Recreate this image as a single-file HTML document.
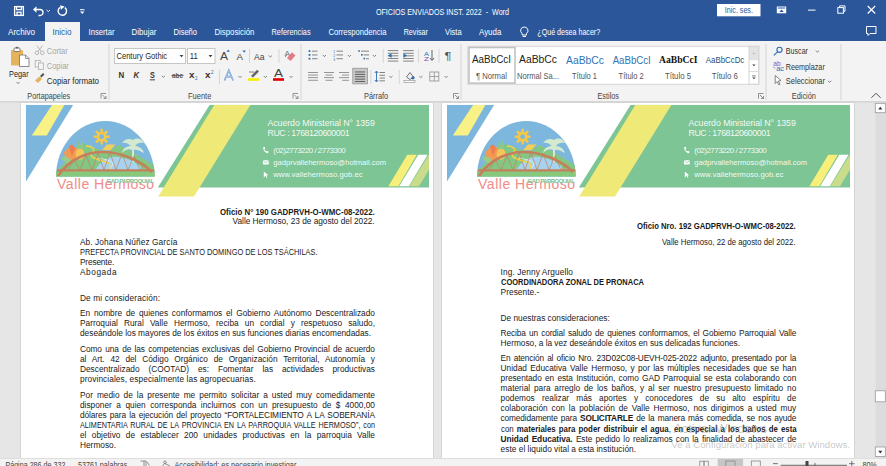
<!DOCTYPE html>
<html><head><meta charset="utf-8">
<style>
*{margin:0;padding:0;box-sizing:border-box}
html,body{width:886px;height:466px;overflow:hidden;background:#e6e6e6;font-family:"Liberation Sans",sans-serif}
.a{position:absolute}
.t{position:absolute;white-space:nowrap}
#title{left:0;top:0;width:886px;height:41px;background:#2b579a}
#ribbon{left:0;top:41px;width:886px;height:61px;background:#f3f3f3;border-bottom:1px solid #d6d6d6}
#doc{left:0;top:102px;width:875px;height:356px;background:#e6e6e6}
.page{position:absolute;top:103px;width:412px;height:355px;background:#fff;box-shadow:0 0 0 1px #d4d4d4}
.tab{position:absolute;top:26px;font-size:9px;line-height:11px;color:#fff}
.rt{position:absolute;font-size:8.6px;line-height:10px;color:#262626;white-space:nowrap}
.gl{position:absolute;font-size:8.6px;line-height:10px;color:#444;white-space:nowrap}
.sep{position:absolute;width:1px;background:#d2d2d2}
.dl{font-family:"Liberation Sans",sans-serif}
.dl b{font-weight:bold}
#status{left:0;top:458px;width:886px;height:8px;background:#f3f3f3;border-top:1px solid #dadada}
</style></head><body>
<!-- ================= TITLE BAR ================= -->
<div id="title" class="a"></div>
<svg class="a" style="left:0;top:0" width="886" height="41" viewBox="0 0 886 41">
  <!-- save -->
  <g fill="none" stroke="#fff" stroke-width="1.3">
    <rect x="14.6" y="6.6" width="8.8" height="8.8"/>
    <rect x="16.5" y="6.6" width="5" height="3"/>
    <rect x="17" y="12.2" width="4" height="3.2"/>
  </g>
  <!-- undo -->
  <path d="M35 9.5 H40 A3 3 0 0 1 40 15.5 H38.5" fill="none" stroke="#fff" stroke-width="1.4"/>
  <path d="M33 9.5 L36.5 6.3 L36.5 12.7 Z" fill="#fff"/>
  <path d="M46.5 10 L48.3 11.6 L50 10" fill="none" stroke="#fff" stroke-width="0.9"/>
  <!-- redo -->
  <path d="M64.8 7.6 A4.2 4.2 0 1 1 60.2 7.4" fill="none" stroke="#fff" stroke-width="1.4"/>
  <path d="M60 5.2 L64.6 6.4 L61 9.8 Z" fill="#fff"/>
  <!-- customize -->
  <rect x="80" y="9.2" width="4.5" height="1" fill="#fff"/>
  <path d="M80 11.5 H84.5 L82.25 14 Z" fill="#fff"/>
  <!-- Inic ses -->
  <rect x="717" y="4" width="43.5" height="12.3" fill="#fff"/>
  <!-- ribbon display -->
  <rect x="776.8" y="6.5" width="9.4" height="6.8" fill="#fff"/>
  <rect x="777.8" y="7.5" width="7.4" height="1" fill="#2b579a"/>
  <path d="M779.3 12 L781.5 9.5 L783.7 12 Z" fill="#2b579a"/>
  <!-- min -->
  <rect x="808" y="9.6" width="7.5" height="1" fill="#fff"/>
  <!-- restore -->
  <rect x="837.8" y="7.6" width="5.6" height="5.6" fill="none" stroke="#fff" stroke-width="1"/>
  <path d="M839.6 7.2 V5.9 H845 V11.3 H843.8" fill="none" stroke="#fff" stroke-width="1"/>
  <!-- close -->
  <path d="M867.7 6 L875.2 13.5 M875.2 6 L867.7 13.5" stroke="#fff" stroke-width="1.1"/>
  <!-- comment -->
  <path d="M866.5 26.5 H876 V33.5 H870 L868 35.5 V33.5 H866.5 Z" fill="none" stroke="#fff" stroke-width="1"/>
  <!-- lightbulb -->
  <path d="M524.3 27 A3.6 3.6 0 0 1 526.5 33.5 V35 H522.1 V33.5 A3.6 3.6 0 0 1 524.3 27 Z" fill="none" stroke="#fff" stroke-width="1"/>
  <rect x="522.6" y="36" width="3.4" height="1" fill="#fff"/>
</svg>
<div class="a" style="left:45px;top:22px;width:35px;height:20px;background:#f3f3f3"></div>
<svg class="a" style="left:0;top:0" width="886" height="41" viewBox="0 0 886 41">
<g font-family="Liberation Sans" font-size="9" fill="#fff">
<text x="375.9" y="14.8" textLength="133.1" lengthAdjust="spacingAndGlyphs">OFICIOS ENVIADOS INST. 2022&#160;&#160;-&#160;&#160;Word</text>
<text x="724.8" y="13.2" textLength="28.1" lengthAdjust="spacingAndGlyphs" fill="#2b579a">Inic. ses.</text>
<text x="8" y="35.2" textLength="27" lengthAdjust="spacingAndGlyphs">Archivo</text>
<text x="52.5" y="35.2" textLength="19" lengthAdjust="spacingAndGlyphs" fill="#2b579a">Inicio</text>
<text x="88.5" y="35.2" textLength="26" lengthAdjust="spacingAndGlyphs">Insertar</text>
<text x="131.5" y="35.2" textLength="25" lengthAdjust="spacingAndGlyphs">Dibujar</text>
<text x="173.5" y="35.2" textLength="23.5" lengthAdjust="spacingAndGlyphs">Diseño</text>
<text x="214.5" y="35.2" textLength="39.8" lengthAdjust="spacingAndGlyphs">Disposición</text>
<text x="271.6" y="35.2" textLength="39" lengthAdjust="spacingAndGlyphs">Referencias</text>
<text x="328.5" y="35.2" textLength="57.9" lengthAdjust="spacingAndGlyphs">Correspondencia</text>
<text x="403.7" y="35.2" textLength="24.3" lengthAdjust="spacingAndGlyphs">Revisar</text>
<text x="445" y="35.2" textLength="16.6" lengthAdjust="spacingAndGlyphs">Vista</text>
<text x="479" y="35.2" textLength="22.3" lengthAdjust="spacingAndGlyphs">Ayuda</text>
<text x="537.3" y="35.2" textLength="62.9" lengthAdjust="spacingAndGlyphs">¿Qué desea hacer?</text>
</g></svg>

<!-- ================= RIBBON ================= -->
<div id="ribbon" class="a"></div>
<svg class="a" style="left:0;top:0" width="886" height="102" viewBox="0 0 886 102">
<rect x="108.5" y="44" width="1" height="56" fill="#d6d6d6"/>
<rect x="300.5" y="44" width="1" height="56" fill="#d6d6d6"/>
<rect x="460.5" y="44" width="1" height="56" fill="#d6d6d6"/>
<rect x="765.5" y="44" width="1" height="56" fill="#d6d6d6"/>
<rect x="840.5" y="44" width="1" height="56" fill="#d6d6d6"/>
<rect x="11" y="50" width="12" height="15.5" rx="1" fill="#e6b35c"/>
<rect x="14" y="48" width="6" height="3.5" rx="0.8" fill="#fff" stroke="#666" stroke-width="0.8"/>
<rect x="15.8" y="46.8" width="2.4" height="1.6" fill="#666"/>
<path d="M19.5,55 H25.5 L29,58.5 V66.5 H19.5 Z" fill="#fff" stroke="#707070" stroke-width="0.8"/>
<path d="M25.5,55 V58.5 H29" fill="none" stroke="#707070" stroke-width="0.7"/>
<text x="9" y="76.6" font-family="Liberation Sans" font-size="8.6" font-weight="normal" fill="#262626" textLength="19.6" lengthAdjust="spacingAndGlyphs" >Pegar</text>
<path d="M16.5,82 L18.1,83.6 L19.7,82" fill="none" stroke="#666" stroke-width="0.8"/>
<g fill="none" stroke="#b0b0b0" stroke-width="0.9"><circle cx="37" cy="52.8" r="1.8"/><circle cx="42.3" cy="52.8" r="1.8"/><path d="M38,51.3 L42.5,45.5 M41.3,51.3 L36.8,45.5"/></g>
<text x="46.8" y="54.4" font-family="Liberation Sans" font-size="8.6" font-weight="normal" fill="#a6a6a6" textLength="21" lengthAdjust="spacingAndGlyphs" >Cortar</text>
<g fill="none" stroke="#b0b0b0" stroke-width="0.8"><rect x="35.2" y="60.5" width="5" height="6.5"/><rect x="38.4" y="63" width="5" height="6.5" fill="#f3f3f3"/></g>
<text x="46.8" y="68.8" font-family="Liberation Sans" font-size="8.6" font-weight="normal" fill="#a6a6a6" textLength="22" lengthAdjust="spacingAndGlyphs" >Copiar</text>
<path d="M35,80.5 L39.5,76.5 L42,79 L38,83 Z" fill="#e6b35c"/><path d="M40,76 L43,73 L44.5,74.5 L41.5,77.5 Z" fill="#555"/>
<text x="46.8" y="84.3" font-family="Liberation Sans" font-size="8.6" font-weight="normal" fill="#262626" textLength="52.2" lengthAdjust="spacingAndGlyphs" >Copiar formato</text>
<text x="27.3" y="99" font-family="Liberation Sans" font-size="8.6" font-weight="normal" fill="#444" textLength="42.9" lengthAdjust="spacingAndGlyphs" >Portapapeles</text>
<g fill="none" stroke="#777" stroke-width="0.8"><path d="M101,98.5 V93.5 H106"/><path d="M102.5,95.0 L106,98.5 M106,96.0 V98.5 H103.5"/></g>
<rect x="114.5" y="48.5" width="71" height="15" fill="#fff" stroke="#c6c6c6" stroke-width="1"/>
<text x="116.4" y="59.1" font-family="Liberation Sans" font-size="8.6" font-weight="normal" fill="#262626" textLength="50.8" lengthAdjust="spacingAndGlyphs" >Century Gothic</text>
<path d="M179.5,55 L183.5,55 L181.5,57.3 Z" fill="#444"/>
<rect x="187.5" y="48.5" width="27.5" height="15" fill="#fff" stroke="#c6c6c6" stroke-width="1"/>
<text x="189.8" y="59.1" font-family="Liberation Sans" font-size="8.6" font-weight="normal" fill="#262626" textLength="8" lengthAdjust="spacingAndGlyphs" >11</text>
<path d="M208.5,55 L212.5,55 L210.5,57.3 Z" fill="#444"/>
<text x="220" y="60" font-family="Liberation Sans" font-size="11" font-weight="normal" fill="#444" textLength="8" lengthAdjust="spacingAndGlyphs" >A</text>
<path d="M226.5,51.8 L228.2,49.5 L229.9,51.8 Z" fill="#2b6cb0"/>
<text x="236.5" y="60" font-family="Liberation Sans" font-size="9" font-weight="normal" fill="#444" textLength="6.5" lengthAdjust="spacingAndGlyphs" >A</text>
<path d="M242.5,50.5 L245.9,50.5 L244.2,52.8 Z" fill="#2b6cb0"/>
<rect x="249" y="49" width="1" height="14" fill="#d6d6d6"/>
<text x="254" y="60" font-family="Liberation Sans" font-size="9.5" font-weight="normal" fill="#444" textLength="10.5" lengthAdjust="spacingAndGlyphs" >Aa</text>
<path d="M268.8,55.5 L270.40000000000003,57.1 L272.0,55.5" fill="none" stroke="#666" stroke-width="0.8"/>
<rect x="278.5" y="49" width="1" height="14" fill="#d6d6d6"/>
<path d="M287,58 L292,52.3 L295.5,55.5 L290.5,61 Z" fill="#e37c86"/><path d="M285,57 L287.5,54.5" stroke="#777" stroke-width="0.8"/>
<text x="284.4" y="55.5" font-family="Liberation Sans" font-size="7" font-weight="normal" fill="#777" textLength="5.5" lengthAdjust="spacingAndGlyphs" >A</text>
<text x="118.5" y="78.2" font-family="Liberation Sans" font-size="8.8" font-weight="bold" fill="#333" textLength="5.7" lengthAdjust="spacingAndGlyphs" >N</text>
<text x="133.4" y="78.2" font-family="Liberation Sans" font-size="8.8" font-weight="bold" fill="#333" textLength="5.6" lengthAdjust="spacingAndGlyphs" font-style="italic">K</text>
<text x="150" y="78.2" font-family="Liberation Sans" font-size="8.8" font-weight="bold" fill="#333" textLength="4.8" lengthAdjust="spacingAndGlyphs" >S</text>
<rect x="149.8" y="79.4" width="5.2" height="0.9" fill="#333"/>
<path d="M161.8,75.8 L163.4,77.39999999999999 L165.0,75.8" fill="none" stroke="#666" stroke-width="0.8"/>
<text x="172" y="78.2" font-family="Liberation Sans" font-size="8" font-weight="bold" fill="#555" textLength="11" lengthAdjust="spacingAndGlyphs" >abc</text>
<rect x="171.5" y="75" width="12" height="0.8" fill="#555"/>
<text x="189" y="78.2" font-family="Liberation Sans" font-size="9" font-weight="bold" fill="#333" textLength="5.5" lengthAdjust="spacingAndGlyphs" >x</text>
<text x="195" y="80.3" font-family="Liberation Sans" font-size="4.5" font-weight="normal" fill="#2b6cb0" textLength="2.5" lengthAdjust="spacingAndGlyphs" >2</text>
<text x="205" y="78.2" font-family="Liberation Sans" font-size="9" font-weight="bold" fill="#333" textLength="5.5" lengthAdjust="spacingAndGlyphs" >x</text>
<text x="211" y="73.5" font-family="Liberation Sans" font-size="4.5" font-weight="normal" fill="#2b6cb0" textLength="2.5" lengthAdjust="spacingAndGlyphs" >2</text>
<rect x="219" y="70" width="1" height="14" fill="#d6d6d6"/>
<path d="M224.5,80.5 L228.8,70.3 L233.1,80.5 M226.3,76.6 H231.3" fill="none" stroke="#5b8fd0" stroke-width="1.6"/><path d="M224.5,80.5 L228.8,70.3 L233.1,80.5 M226.3,76.6 H231.3" fill="none" stroke="#f3f3f3" stroke-width="0.5"/>
<path d="M238.5,76 L240.1,77.6 L241.7,76" fill="none" stroke="#666" stroke-width="0.8"/>
<path d="M251,76 L257,69.8 L259,71.5 L253,77.5 Z" fill="#666"/><path d="M249,72 L254,72" stroke="#666" stroke-width="0.8"/>
<rect x="248" y="78.2" width="11.3" height="2.6" fill="#f6ee00"/>
<path d="M263.8,76 L265.40000000000003,77.6 L267.0,76" fill="none" stroke="#666" stroke-width="0.8"/>
<text x="274" y="77" font-family="Liberation Sans" font-size="10" font-weight="normal" fill="#444" textLength="9" lengthAdjust="spacingAndGlyphs" >A</text>
<rect x="273" y="78.2" width="11" height="2.6" fill="#e00000"/>
<path d="M289.5,76 L291.1,77.6 L292.7,76" fill="none" stroke="#666" stroke-width="0.8"/>
<text x="188" y="99" font-family="Liberation Sans" font-size="8.6" font-weight="normal" fill="#444" textLength="23.4" lengthAdjust="spacingAndGlyphs" >Fuente</text>
<g fill="none" stroke="#777" stroke-width="0.8"><path d="M293,98.5 V93.5 H298"/><path d="M294.5,95.0 L298,98.5 M298,96.0 V98.5 H295.5"/></g>
<g fill="#2b6cb0"><rect x="308.6" y="50.2" width="1.8" height="1.8"/><rect x="308.6" y="54.0" width="1.8" height="1.8"/><rect x="308.6" y="57.800000000000004" width="1.8" height="1.8"/></g>
<rect x="312" y="50.7" width="5.5" height="0.9" fill="#777"/><rect x="312" y="54.5" width="5.5" height="0.9" fill="#777"/><rect x="312" y="58.300000000000004" width="5.5" height="0.9" fill="#777"/>
<path d="M322.8,55 L324.40000000000003,56.6 L326.0,55" fill="none" stroke="#666" stroke-width="0.8"/>
<g fill="#2b6cb0" font-family="Liberation Sans" font-size="3.4"><text x="333.2" y="53.0">1</text><text x="333.2" y="56.8">2</text><text x="333.2" y="60.6">3</text></g>
<rect x="336.5" y="50.7" width="6.5" height="0.9" fill="#777"/><rect x="336.5" y="54.5" width="6.5" height="0.9" fill="#777"/><rect x="336.5" y="58.300000000000004" width="6.5" height="0.9" fill="#777"/>
<path d="M347.8,55 L349.40000000000003,56.6 L351.0,55" fill="none" stroke="#666" stroke-width="0.8"/>
<g fill="#2b6cb0"><rect x="358.3" y="50.2" width="1.6" height="1.6"/><rect x="361" y="54" width="1.6" height="1.6"/><rect x="363.5" y="57.8" width="1.6" height="1.6"/></g>
<rect x="361" y="50.7" width="8" height="0.9" fill="#777"/><rect x="363.5" y="54.5" width="5.5" height="0.9" fill="#777"/><rect x="366" y="58.3" width="3" height="0.9" fill="#777"/>
<path d="M372.8,55 L374.40000000000003,56.6 L376.0,55" fill="none" stroke="#666" stroke-width="0.8"/>
<rect x="382.8" y="49" width="1" height="14" fill="#d6d6d6"/>
<rect x="387.8" y="50.2" width="10.5" height="0.9" fill="#777"/><rect x="387.8" y="52.800000000000004" width="10.5" height="0.9" fill="#777"/><rect x="387.8" y="55.400000000000006" width="10.5" height="0.9" fill="#777"/><rect x="387.8" y="58.0" width="10.5" height="0.9" fill="#777"/><rect x="387.8" y="60.6" width="10.5" height="0.9" fill="#777"/>
<path d="M388,55.6 L391.5,53.3 V57.9 Z" fill="#2b6cb0"/>
<rect x="403.2" y="50.2" width="10.5" height="0.9" fill="#777"/><rect x="403.2" y="52.800000000000004" width="10.5" height="0.9" fill="#777"/><rect x="403.2" y="55.400000000000006" width="10.5" height="0.9" fill="#777"/><rect x="403.2" y="58.0" width="10.5" height="0.9" fill="#777"/><rect x="403.2" y="60.6" width="10.5" height="0.9" fill="#777"/>
<path d="M407,55.6 L403.5,53.3 V57.9 Z" fill="#2b6cb0"/>
<rect x="418" y="49" width="1" height="14" fill="#d6d6d6"/>
<text x="424" y="55.5" font-family="Liberation Sans" font-size="6" font-weight="normal" fill="#2b6cb0" textLength="5" lengthAdjust="spacingAndGlyphs" >A</text>
<text x="424" y="61" font-family="Liberation Sans" font-size="6" font-weight="normal" fill="#8a4fb0" textLength="5" lengthAdjust="spacingAndGlyphs" >Z</text>
<path d="M432,50 V60 M430,58 L432,60.5 L434,58" fill="none" stroke="#555" stroke-width="0.9"/>
<rect x="438.5" y="49" width="1" height="14" fill="#d6d6d6"/>
<text x="444.5" y="60" font-family="Liberation Sans" font-size="10.5" font-weight="normal" fill="#555" textLength="7" lengthAdjust="spacingAndGlyphs" >¶</text>
<rect x="308" y="72.0" width="10" height="0.9" fill="#8a8a8a"/><rect x="308" y="74.6" width="10" height="0.9" fill="#8a8a8a"/><rect x="308" y="77.2" width="10" height="0.9" fill="#8a8a8a"/><rect x="308" y="79.8" width="10" height="0.9" fill="#8a8a8a"/>
<rect x="324" y="72.0" width="10" height="0.9" fill="#8a8a8a"/><rect x="325.5" y="74.6" width="7" height="0.9" fill="#8a8a8a"/><rect x="324" y="77.2" width="10" height="0.9" fill="#8a8a8a"/><rect x="325.5" y="79.8" width="7" height="0.9" fill="#8a8a8a"/>
<rect x="339" y="72.0" width="10" height="0.9" fill="#8a8a8a"/><rect x="342" y="74.6" width="7" height="0.9" fill="#8a8a8a"/><rect x="339" y="77.2" width="10" height="0.9" fill="#8a8a8a"/><rect x="342" y="79.8" width="7" height="0.9" fill="#8a8a8a"/>
<rect x="352.8" y="68.3" width="14.6" height="15.5" fill="#c8c8c8" stroke="#9a9a9a" stroke-width="0.9"/>
<rect x="355" y="71.5" width="10" height="0.9" fill="#555"/><rect x="355" y="73.9" width="10" height="0.9" fill="#555"/><rect x="355" y="76.3" width="10" height="0.9" fill="#555"/><rect x="355" y="78.7" width="10" height="0.9" fill="#555"/><rect x="355" y="81.1" width="10" height="0.9" fill="#555"/>
<rect x="370.3" y="70" width="1" height="14" fill="#d6d6d6"/>
<path d="M376.5,71.5 V81.5 M374.8,73 L376.5,71 L378.2,73 M374.8,80 L376.5,82 L378.2,80" fill="none" stroke="#2b6cb0" stroke-width="0.9"/>
<rect x="379.5" y="72.0" width="5.5" height="0.9" fill="#777"/><rect x="379.5" y="74.8" width="5.5" height="0.9" fill="#777"/><rect x="379.5" y="77.6" width="5.5" height="0.9" fill="#777"/><rect x="379.5" y="80.4" width="5.5" height="0.9" fill="#777"/>
<path d="M389.3,76 L390.90000000000003,77.6 L392.5,76" fill="none" stroke="#666" stroke-width="0.8"/>
<rect x="398.8" y="70" width="1" height="14" fill="#d6d6d6"/>
<path d="M406.5,77 L410,72.5 L413.5,77 L410,79.5 Z" fill="none" stroke="#666" stroke-width="0.9"/><circle cx="413" cy="77.8" r="1.6" fill="#2b6cb0"/><rect x="404" y="80.5" width="11" height="2" fill="#fff" stroke="#888" stroke-width="0.6"/>
<path d="M419.3,76 L420.90000000000003,77.6 L422.5,76" fill="none" stroke="#666" stroke-width="0.8"/>
<g fill="none" stroke="#9a9a9a" stroke-width="0.9"><rect x="429.8" y="72" width="9" height="9"/><path d="M434.3,72 V81 M429.8,76.5 H438.8"/></g>
<path d="M444.5,76 L446.1,77.6 L447.7,76" fill="none" stroke="#666" stroke-width="0.8"/>
<text x="364" y="99" font-family="Liberation Sans" font-size="8.6" font-weight="normal" fill="#444" textLength="24.2" lengthAdjust="spacingAndGlyphs" >Párrafo</text>
<g fill="none" stroke="#777" stroke-width="0.8"><path d="M453.5,98.5 V93.5 H458.5"/><path d="M455.0,95.0 L458.5,98.5 M458.5,96.0 V98.5 H456.0"/></g>
<rect x="467.8" y="46.3" width="291" height="38" fill="#fff" stroke="#d6d6d6" stroke-width="1"/>
<rect x="469" y="47.5" width="46" height="35.6" fill="#fff" stroke="#c2c2c2" stroke-width="1.6"/>
<text x="472" y="63.3" font-family="Liberation Sans" font-size="10" font-weight="normal" fill="#222" textLength="39" lengthAdjust="spacingAndGlyphs" >AaBbCcI</text>
<text x="519" y="63.3" font-family="Liberation Sans" font-size="10" font-weight="normal" fill="#222" textLength="38" lengthAdjust="spacingAndGlyphs" >AaBbCc</text>
<text x="566" y="64" font-family="Liberation Sans" font-size="11.5" font-weight="normal" fill="#2e74b5" textLength="38" lengthAdjust="spacingAndGlyphs" >AaBbCc</text>
<text x="612.7" y="63.5" font-family="Liberation Sans" font-size="10" font-weight="normal" fill="#2e74b5" textLength="38" lengthAdjust="spacingAndGlyphs" >AaBbCcI</text>
<text x="659" y="63.3" font-family="Liberation Serif" font-size="10.5" font-weight="bold" fill="#111" textLength="38.5" lengthAdjust="spacingAndGlyphs" >AaBbCcI</text>
<text x="705.8" y="63.3" font-family="Liberation Sans" font-size="9.5" font-weight="normal" fill="#1f4e79" textLength="38.5" lengthAdjust="spacingAndGlyphs" >AaBbCcDc</text>
<text x="476" y="79" font-family="Liberation Sans" font-size="8.4" font-weight="normal" fill="#555" textLength="31" lengthAdjust="spacingAndGlyphs" >¶ Normal</text>
<text x="517" y="79" font-family="Liberation Sans" font-size="8.4" font-weight="normal" fill="#555" textLength="42" lengthAdjust="spacingAndGlyphs" >Normal Sa...</text>
<text x="572" y="79" font-family="Liberation Sans" font-size="8.4" font-weight="normal" fill="#555" textLength="25" lengthAdjust="spacingAndGlyphs" >Título 1</text>
<text x="618.6" y="79" font-family="Liberation Sans" font-size="8.4" font-weight="normal" fill="#555" textLength="25.2" lengthAdjust="spacingAndGlyphs" >Título 2</text>
<text x="665" y="79" font-family="Liberation Sans" font-size="8.4" font-weight="normal" fill="#555" textLength="26" lengthAdjust="spacingAndGlyphs" >Título 5</text>
<text x="711.7" y="79" font-family="Liberation Sans" font-size="8.4" font-weight="normal" fill="#555" textLength="26.1" lengthAdjust="spacingAndGlyphs" >Título 6</text>
<rect x="749" y="46.3" width="9.8" height="13" fill="#e3e3e3"/>
<path d="M752.2,54 L753.9,52.2 L755.6,54 Z" fill="#c0c0c0"/>
<rect x="749" y="46.3" width="9.8" height="38" fill="none" stroke="#d6d6d6" stroke-width="1"/>
<rect x="749" y="59.3" width="9.8" height="0.8" fill="#d6d6d6"/><rect x="749" y="71" width="9.8" height="0.8" fill="#d6d6d6"/>
<path d="M752.2,64.5 L755.6,64.5 L753.9,66.3 Z" fill="#444"/>
<rect x="752" y="75.6" width="3.8" height="0.7" fill="#444"/><path d="M752.2,77.5 L755.6,77.5 L753.9,79.3 Z" fill="#444"/>
<text x="597.5" y="99" font-family="Liberation Sans" font-size="8.6" font-weight="normal" fill="#444" textLength="21.5" lengthAdjust="spacingAndGlyphs" >Estilos</text>
<g fill="none" stroke="#777" stroke-width="0.8"><path d="M758.5,98.5 V93.5 H763.5"/><path d="M760.0,95.0 L763.5,98.5 M763.5,96.0 V98.5 H761.0"/></g>
<g fill="none" stroke="#2b6cb0" stroke-width="1.1"><circle cx="779.5" cy="49.8" r="2.6"/><path d="M777.6,51.8 L773.8,55.3"/></g>
<text x="785.8" y="54" font-family="Liberation Sans" font-size="8.6" font-weight="normal" fill="#333" textLength="22.2" lengthAdjust="spacingAndGlyphs" >Buscar</text>
<path d="M815.8,50.6 L817.4,52.2 L819.0,50.6" fill="none" stroke="#666" stroke-width="0.8"/>
<text x="773.2" y="65.8" font-family="Liberation Sans" font-size="8" font-weight="normal" fill="#8a4fb0" textLength="7.5" lengthAdjust="spacingAndGlyphs" >ab</text>
<text x="776.2" y="70.8" font-family="Liberation Sans" font-size="8" font-weight="normal" fill="#2b6cb0" textLength="7.8" lengthAdjust="spacingAndGlyphs" >ac</text>
<path d="M773.5,66.8 L775,68.5" stroke="#2b6cb0" stroke-width="0.8"/>
<text x="785.8" y="69.6" font-family="Liberation Sans" font-size="8.6" font-weight="normal" fill="#333" textLength="39" lengthAdjust="spacingAndGlyphs" >Reemplazar</text>
<path d="M775.2,75.5 V83.5 L777,81.5 L778.8,84.8 L780,84.2 L778.4,81 L781,80.5 Z" fill="#fff" stroke="#666" stroke-width="0.8"/>
<text x="785.8" y="84.4" font-family="Liberation Sans" font-size="8.6" font-weight="normal" fill="#333" textLength="39.2" lengthAdjust="spacingAndGlyphs" >Seleccionar</text>
<path d="M828,80.8 L829.6,82.39999999999999 L831.2,80.8" fill="none" stroke="#666" stroke-width="0.8"/>
<text x="791.7" y="99" font-family="Liberation Sans" font-size="8.6" font-weight="normal" fill="#444" textLength="24.3" lengthAdjust="spacingAndGlyphs" >Edición</text>
<path d="M871.3,97.8 L876,93.3 L880.7,97.8" fill="none" stroke="#555" stroke-width="1"/>
</svg>

<!-- ================= DOCUMENT ================= -->
<div id="doc" class="a"></div>
<div class="a" style="left:0;top:102px;width:875px;height:1px;background:#dcdcdc"></div>
<div class="page" style="left:21px"></div>
<div class="page" style="left:442px"></div>
<svg class="a" style="left:0;top:0;pointer-events:none" width="886" height="466" viewBox="0 0 886 466">
<defs><clipPath id="hc0"><rect x="26" y="104.7" width="403" height="95"/></clipPath>
<clipPath id="dome0"><path d="M56,176.5 A49.3,55.5 0 0 1 154.6,176.5 Z"/></clipPath></defs>
<g transform="translate(0,0)">
<g clip-path="url(#hc0)">
 <polygon points="26,104.7 73.3,104.7 26,181.5" fill="#7db6dc"/>
 <polygon points="52.2,104.7 64.5,104.7 46.8,135.4 31.8,135.4" fill="#f8f186"/>
 <polygon points="209.7,104.7 429,104.7 429,187.6 157.8,187.6" fill="#7ec596"/>
 <polygon points="214.4,104.7 250.5,104.7 194,196.6 158.2,196.6" fill="#efea78"/>
 <polygon points="407.3,154.8 416.8,154.8 398.3,186.2 388.4,186.2" fill="#f8ef7a"/>
 <polygon points="418.3,154.8 427.6,154.8 408.8,186.2 399.2,186.2" fill="#ffffff"/>
 <polygon points="428.8,154.8 438,154.8 419,186.2 409.4,186.2" fill="#c9dc8a"/>
</g>
<!-- logo -->
<path d="M56,176.5 A49.3,55.5 0 0 1 154.6,176.5 Z" fill="#7eb7de"/>
<g clip-path="url(#dome0)">
 <path d="M56,172 C62,165 72,156 84,144 C90,146 100,150 108,152 L118,145 C130,150 142,158 156,166 L156,177 L56,177 Z" fill="#84c683"/>
 <path d="M102,150.2 L107,144.4 L115.5,144.4 L110.5,150.2 Z" fill="#f2cf5a"/>
 <path d="M92,177 C96,166 104,158 112,157 C122,156 132,160 140,166 L146,177 Z" fill="#a6d4f0"/>
 <path d="M98,158 C108,160 116,162 112,166 C106,170 116,172 124,174" fill="none" stroke="#ffffff" stroke-width="0.8" opacity="0.8"/>
 <path d="M86,146 C92,146 96,149 92,153 C88,157 98,160 106,162 C114,164 106,168 112,172" fill="none" stroke="#f4d24a" stroke-width="1.4"/>
 <path d="M56,171 H156 V177 H56 Z" fill="#86c97c"/>
 <path d="M64,152 C70,146 76,145 78,150 C80,156 78,160 74,162 C70,162 64,158 64,152 Z" fill="#f29a52"/>
 <path d="M69,147 C71,143 74,145 75,149 L72,156 Z" fill="#ef7d50"/>
 <path d="M61,158 C65,155 70,157 73,163 C68,164 63,162 61,158 Z" fill="#9acb8a"/>
 <ellipse cx="80" cy="154" rx="4.4" ry="5.8" fill="#f6c55a"/>
 <path d="M76.5,149 L78,140 L80,146 L82,139.5 L83.5,149 Z" fill="#8cc88a"/>
 <g fill="#f6c847">
  <circle cx="101.6" cy="136.7" r="5"/>
  <path d="M101.6,128.8 V144.6 M93.7,136.7 H109.5 M96,131.1 L107.2,142.3 M107.2,131.1 L96,142.3" stroke="#f6c847" stroke-width="2.4"/>
 </g>
 <circle cx="101.6" cy="136.7" r="2.4" fill="#7eb7de"/>
 <path d="M133,140 C137,137 142,139 144,143 C140,142 137,143 135,146 C139,146 143,149 144,153 C139,150 136,149 134,150 L134,162 L132,162 L132,150 C129,148 125,150 122,153 C123,148 127,146 131,146 C128,143 125,142 122,143 C125,139 129,138 133,140 Z" fill="#d3ead0"/>
 <path d="M58,176 C70,158 88,152 103,152 C120,152 140,160 152,172" fill="none" stroke="#c4805c" stroke-width="2.6"/>
 <path d="M57,170.3 H156" stroke="#c4805c" stroke-width="2.2"/>
 <path d="M68,170 L74,160 L80,170 L86,155.5 L92,170 L98,153 L104,170 L110,152.5 L116,170 L122,153.5 L128,170 L134,156 L140,170 L146,164" fill="none" stroke="#c4805c" stroke-width="0.7"/>
</g>
<text x="57" y="189" font-family="Liberation Sans" font-size="14" fill="#f08c8a" textLength="97" lengthAdjust="spacing">Valle Hermoso</text>
<rect x="110.8" y="177" width="45" height="5.2" fill="#fff"/>
<text x="106.6" y="182.6" font-family="Liberation Sans" font-size="5.9" font-weight="bold" fill="#7cc091" textLength="47.4" lengthAdjust="spacing">GAD PARROQUIAL</text>
<!-- contact -->
<g fill="#ffffff" font-family="Liberation Sans" fill-opacity="0.92">
 <text x="267.5" y="126" font-size="8.8" textLength="107.3" lengthAdjust="spacing">Acuerdo Ministerial N° 1359</text>
 <text x="267.5" y="135.7" font-size="8.8" textLength="82.1" lengthAdjust="spacing">RUC : 1768120600001</text>
 <text x="273.3" y="153.2" font-size="8" textLength="72.5" lengthAdjust="spacing">(02)2773220 / 2773300</text>
 <text x="273.3" y="164.8" font-size="7.6" textLength="112.7" lengthAdjust="spacing">gadprvallehermoso@hotmail.com</text>
 <text x="273.3" y="177.4" font-size="7.6" textLength="89.3" lengthAdjust="spacing">www.vallehermoso.gob.ec</text>
</g>
<g fill="#ffffff">
 <path d="M263.3,147 C263,150 265,153 268,153.3 L268.6,151.8 L266.8,150.8 L266,151.5 C265.2,151 264.6,150 264.5,149.2 L265.3,148.6 L264.6,146.7 Z"/>
 <rect x="262.9" y="160.2" width="5.8" height="4.2" rx="0.6"/>
 <path d="M263.8,177.4 L263.8,171.4 L268.3,175.2 L266.4,175.3 L267.4,177.6 L266.6,178 L265.6,175.8 Z"/>
</g>
<path d="M263.2,160.7 L265.8,162.8 L268.4,160.7" fill="none" stroke="#7ec596" stroke-width="0.7"/>
</g></svg><svg class="a" style="left:0;top:0;pointer-events:none" width="886" height="466" viewBox="0 0 886 466">
<defs><clipPath id="hc421"><rect x="26" y="104.7" width="403" height="95"/></clipPath>
<clipPath id="dome421"><path d="M56,176.5 A49.3,55.5 0 0 1 154.6,176.5 Z"/></clipPath></defs>
<g transform="translate(421,0)">
<g clip-path="url(#hc421)">
 <polygon points="26,104.7 73.3,104.7 26,181.5" fill="#7db6dc"/>
 <polygon points="52.2,104.7 64.5,104.7 46.8,135.4 31.8,135.4" fill="#f8f186"/>
 <polygon points="209.7,104.7 429,104.7 429,187.6 157.8,187.6" fill="#7ec596"/>
 <polygon points="214.4,104.7 250.5,104.7 194,196.6 158.2,196.6" fill="#efea78"/>
 <polygon points="407.3,154.8 416.8,154.8 398.3,186.2 388.4,186.2" fill="#f8ef7a"/>
 <polygon points="418.3,154.8 427.6,154.8 408.8,186.2 399.2,186.2" fill="#ffffff"/>
 <polygon points="428.8,154.8 438,154.8 419,186.2 409.4,186.2" fill="#c9dc8a"/>
</g>
<!-- logo -->
<path d="M56,176.5 A49.3,55.5 0 0 1 154.6,176.5 Z" fill="#7eb7de"/>
<g clip-path="url(#dome421)">
 <path d="M56,172 C62,165 72,156 84,144 C90,146 100,150 108,152 L118,145 C130,150 142,158 156,166 L156,177 L56,177 Z" fill="#84c683"/>
 <path d="M102,150.2 L107,144.4 L115.5,144.4 L110.5,150.2 Z" fill="#f2cf5a"/>
 <path d="M92,177 C96,166 104,158 112,157 C122,156 132,160 140,166 L146,177 Z" fill="#a6d4f0"/>
 <path d="M98,158 C108,160 116,162 112,166 C106,170 116,172 124,174" fill="none" stroke="#ffffff" stroke-width="0.8" opacity="0.8"/>
 <path d="M86,146 C92,146 96,149 92,153 C88,157 98,160 106,162 C114,164 106,168 112,172" fill="none" stroke="#f4d24a" stroke-width="1.4"/>
 <path d="M56,171 H156 V177 H56 Z" fill="#86c97c"/>
 <path d="M64,152 C70,146 76,145 78,150 C80,156 78,160 74,162 C70,162 64,158 64,152 Z" fill="#f29a52"/>
 <path d="M69,147 C71,143 74,145 75,149 L72,156 Z" fill="#ef7d50"/>
 <path d="M61,158 C65,155 70,157 73,163 C68,164 63,162 61,158 Z" fill="#9acb8a"/>
 <ellipse cx="80" cy="154" rx="4.4" ry="5.8" fill="#f6c55a"/>
 <path d="M76.5,149 L78,140 L80,146 L82,139.5 L83.5,149 Z" fill="#8cc88a"/>
 <g fill="#f6c847">
  <circle cx="101.6" cy="136.7" r="5"/>
  <path d="M101.6,128.8 V144.6 M93.7,136.7 H109.5 M96,131.1 L107.2,142.3 M107.2,131.1 L96,142.3" stroke="#f6c847" stroke-width="2.4"/>
 </g>
 <circle cx="101.6" cy="136.7" r="2.4" fill="#7eb7de"/>
 <path d="M133,140 C137,137 142,139 144,143 C140,142 137,143 135,146 C139,146 143,149 144,153 C139,150 136,149 134,150 L134,162 L132,162 L132,150 C129,148 125,150 122,153 C123,148 127,146 131,146 C128,143 125,142 122,143 C125,139 129,138 133,140 Z" fill="#d3ead0"/>
 <path d="M58,176 C70,158 88,152 103,152 C120,152 140,160 152,172" fill="none" stroke="#c4805c" stroke-width="2.6"/>
 <path d="M57,170.3 H156" stroke="#c4805c" stroke-width="2.2"/>
 <path d="M68,170 L74,160 L80,170 L86,155.5 L92,170 L98,153 L104,170 L110,152.5 L116,170 L122,153.5 L128,170 L134,156 L140,170 L146,164" fill="none" stroke="#c4805c" stroke-width="0.7"/>
</g>
<text x="57" y="189" font-family="Liberation Sans" font-size="14" fill="#f08c8a" textLength="97" lengthAdjust="spacing">Valle Hermoso</text>
<rect x="110.8" y="177" width="45" height="5.2" fill="#fff"/>
<text x="106.6" y="182.6" font-family="Liberation Sans" font-size="5.9" font-weight="bold" fill="#7cc091" textLength="47.4" lengthAdjust="spacing">GAD PARROQUIAL</text>
<!-- contact -->
<g fill="#ffffff" font-family="Liberation Sans" fill-opacity="0.92">
 <text x="267.5" y="126" font-size="8.8" textLength="107.3" lengthAdjust="spacing">Acuerdo Ministerial N° 1359</text>
 <text x="267.5" y="135.7" font-size="8.8" textLength="82.1" lengthAdjust="spacing">RUC : 1768120600001</text>
 <text x="273.3" y="153.2" font-size="8" textLength="72.5" lengthAdjust="spacing">(02)2773220 / 2773300</text>
 <text x="273.3" y="164.8" font-size="7.6" textLength="112.7" lengthAdjust="spacing">gadprvallehermoso@hotmail.com</text>
 <text x="273.3" y="177.4" font-size="7.6" textLength="89.3" lengthAdjust="spacing">www.vallehermoso.gob.ec</text>
</g>
<g fill="#ffffff">
 <path d="M263.3,147 C263,150 265,153 268,153.3 L268.6,151.8 L266.8,150.8 L266,151.5 C265.2,151 264.6,150 264.5,149.2 L265.3,148.6 L264.6,146.7 Z"/>
 <rect x="262.9" y="160.2" width="5.8" height="4.2" rx="0.6"/>
 <path d="M263.8,177.4 L263.8,171.4 L268.3,175.2 L266.4,175.3 L267.4,177.6 L266.6,178 L265.6,175.8 Z"/>
</g>
<path d="M263.2,160.7 L265.8,162.8 L268.4,160.7" fill="none" stroke="#7ec596" stroke-width="0.7"/>
</g></svg>
<div id="l_of" class="t dl" style="left:220.00px;top:207.67px;font-size:8.3px;line-height:8.3px;color:#1a1a1a;letter-spacing:0.000px;word-spacing:0.000px;transform:scaleX(0.9482);transform-origin:0 0;"><b>Oficio N° 190 GADPRVH-O-WMC-08-2022.</b></div>
<div id="l_dt" class="t dl" style="left:232.60px;top:216.67px;font-size:8.3px;line-height:8.3px;color:#1a1a1a;letter-spacing:-0.021px;word-spacing:0.000px;">Valle Hermoso, 23 de agosto del 2022.</div>
<div id="l_ab" class="t dl" style="left:80.00px;top:238.07px;font-size:8.3px;line-height:8.3px;color:#1a1a1a;letter-spacing:0.087px;word-spacing:0.000px;">Ab. Johana Núñez García</div>
<div id="l_pr" class="t dl" style="left:80.00px;top:247.77px;font-size:8.3px;line-height:8.3px;color:#1a1a1a;letter-spacing:0.000px;word-spacing:0.000px;transform:scaleX(0.8922);transform-origin:0 0;">PREFECTA PROVINCIAL DE SANTO DOMINGO DE LOS TSÁCHILAS.</div>
<div id="l_pe" class="t dl" style="left:80.00px;top:257.87px;font-size:8.3px;line-height:8.3px;color:#1a1a1a;letter-spacing:-0.164px;word-spacing:0.000px;">Presente.</div>
<div id="l_abo" class="t dl" style="left:80.00px;top:267.87px;font-size:8.3px;line-height:8.3px;color:#1a1a1a;letter-spacing:0.561px;word-spacing:0.000px;">Abogada</div>
<div id="l_de" class="t dl" style="left:80.00px;top:293.67px;font-size:8.3px;line-height:8.3px;color:#1a1a1a;letter-spacing:0.132px;word-spacing:0.000px;">De mi consideración:</div>
<div id="l_p1a" class="t dl" style="left:80.00px;top:309.27px;font-size:8.3px;line-height:8.3px;color:#1a1a1a;letter-spacing:0.004px;word-spacing:1.497px;">En nombre de quienes conformamos el Gobierno Autónomo Descentralizado</div>
<div id="l_p1b" class="t dl" style="left:80.00px;top:319.27px;font-size:8.3px;line-height:8.3px;color:#1a1a1a;letter-spacing:0.004px;word-spacing:3.808px;">Parroquial Rural Valle Hermoso, reciba un cordial y respetuoso saludo,</div>
<div id="l_p1c" class="t dl" style="left:80.00px;top:329.27px;font-size:8.3px;line-height:8.3px;color:#1a1a1a;letter-spacing:-0.000px;word-spacing:0.000px;">deseándole los mayores de los éxitos en sus funciones diarias encomendadas.</div>
<div id="l_p2a" class="t dl" style="left:80.00px;top:345.27px;font-size:8.3px;line-height:8.3px;color:#1a1a1a;letter-spacing:-0.051px;word-spacing:1.000px;">Como una de las competencias exclusivas del Gobierno Provincial de acuerdo</div>
<div id="l_p2b" class="t dl" style="left:80.00px;top:355.07px;font-size:8.3px;line-height:8.3px;color:#1a1a1a;letter-spacing:0.004px;word-spacing:3.427px;">al Art. 42 del Código Orgánico de Organización Territorial, Autonomía y</div>
<div id="l_p2c" class="t dl" style="left:80.00px;top:364.87px;font-size:8.3px;line-height:8.3px;color:#1a1a1a;letter-spacing:0.004px;word-spacing:6.645px;">Descentralizado (COOTAD) es: Fomentar las actividades productivas</div>
<div id="l_p2d" class="t dl" style="left:80.00px;top:374.77px;font-size:8.3px;line-height:8.3px;color:#1a1a1a;letter-spacing:0.082px;word-spacing:0.000px;">provinciales, especialmente las agropecuarias.</div>
<div id="l_p3a" class="t dl" style="left:80.00px;top:390.97px;font-size:8.3px;line-height:8.3px;color:#1a1a1a;letter-spacing:0.004px;word-spacing:1.719px;">Por medio de la presente me permito solicitar a usted muy comedidamente</div>
<div id="l_p3b" class="t dl" style="left:80.00px;top:400.97px;font-size:8.3px;line-height:8.3px;color:#1a1a1a;letter-spacing:0.004px;word-spacing:2.161px;">disponer a quien corresponda incluirnos con un presupuesto de $ 4000,00</div>
<div id="l_p3c" class="t dl" style="left:80.00px;top:410.87px;font-size:8.3px;line-height:8.3px;color:#1a1a1a;letter-spacing:-0.092px;word-spacing:1.000px;">dólares para la ejecución del proyecto “FORTALECIMIENTO A LA SOBERANÍA</div>
<div id="l_p3d" class="t dl" style="left:80.00px;top:420.87px;font-size:8.3px;line-height:8.3px;color:#1a1a1a;letter-spacing:0.000px;word-spacing:1.000px;transform:scaleX(0.8728);transform-origin:0 0;">ALIMENTARIA RURAL DE LA PROVINCIA EN LA PARROQUIA VALLE HERMOSO”, con</div>
<div id="l_p3e" class="t dl" style="left:80.00px;top:430.77px;font-size:8.3px;line-height:8.3px;color:#1a1a1a;letter-spacing:0.004px;word-spacing:3.054px;">el objetivo de establecer 200 unidades productivas en la parroquia Valle</div>
<div id="l_p3f" class="t dl" style="left:80.00px;top:440.87px;font-size:8.3px;line-height:8.3px;color:#1a1a1a;letter-spacing:0.004px;word-spacing:0.000px;">Hermoso.</div>
<div id="r_ing" class="t dl" style="left:500.60px;top:268.27px;font-size:8.3px;line-height:8.3px;color:#1a1a1a;letter-spacing:0.101px;word-spacing:0.000px;">Ing. Jenny Arguello</div>
<div id="r_co" class="t dl" style="left:500.60px;top:277.57px;font-size:8.3px;line-height:8.3px;color:#1a1a1a;letter-spacing:0.000px;word-spacing:0.000px;transform:scaleX(0.9044);transform-origin:0 0;"><b>COORDINADORA ZONAL DE PRONACA</b></div>
<div id="r_pe" class="t dl" style="left:500.60px;top:287.67px;font-size:8.3px;line-height:8.3px;color:#1a1a1a;letter-spacing:0.047px;word-spacing:0.000px;">Presente.-</div>
<div id="r_de" class="t dl" style="left:500.60px;top:313.57px;font-size:8.3px;line-height:8.3px;color:#1a1a1a;letter-spacing:-0.004px;word-spacing:0.000px;">De nuestras consideraciones:</div>
<div id="r_p1a" class="t dl" style="left:500.60px;top:328.97px;font-size:8.3px;line-height:8.3px;color:#1a1a1a;letter-spacing:-0.110px;word-spacing:1.000px;">Reciba un cordial saludo de quienes conformamos, el Gobierno Parroquial Valle</div>
<div id="r_p1b" class="t dl" style="left:500.60px;top:339.17px;font-size:8.3px;line-height:8.3px;color:#1a1a1a;letter-spacing:-0.014px;word-spacing:0.000px;">Hermoso, a la vez deseándole éxitos en sus delicadas funciones.</div>
<div id="r_p2a" class="t dl" style="left:500.60px;top:353.97px;font-size:8.3px;line-height:8.3px;color:#1a1a1a;letter-spacing:-0.132px;word-spacing:1.000px;">En atención al oficio Nro. 23D02C08-UEVH-025-2022 adjunto, presentado por la</div>
<div id="r_p2b" class="t dl" style="left:500.60px;top:364.17px;font-size:8.3px;line-height:8.3px;color:#1a1a1a;letter-spacing:0.004px;word-spacing:1.000px;">Unidad Educativa Valle Hermoso, y por las múltiples necesidades que se han</div>
<div id="r_p2c" class="t dl" style="left:500.60px;top:374.37px;font-size:8.3px;line-height:8.3px;color:#1a1a1a;letter-spacing:-0.041px;word-spacing:1.000px;">presentado en esta Institución, como GAD Parroquial se esta colaborando con</div>
<div id="r_p2d" class="t dl" style="left:500.60px;top:384.37px;font-size:8.3px;line-height:8.3px;color:#1a1a1a;letter-spacing:0.004px;word-spacing:1.477px;">material para arreglo de los baños, y al ser nuestro presupuesto limitado no</div>
<div id="r_p2e" class="t dl" style="left:500.60px;top:394.47px;font-size:8.3px;line-height:8.3px;color:#1a1a1a;letter-spacing:0.004px;word-spacing:4.821px;">podemos realizar más aportes y conocedores de su alto espíritu de</div>
<div id="r_p2f" class="t dl" style="left:500.60px;top:404.37px;font-size:8.3px;line-height:8.3px;color:#1a1a1a;letter-spacing:0.004px;word-spacing:1.584px;">colaboración con la población de Valle Hermoso, nos dirigimos a usted muy</div>
<div id="r_p2g" class="t dl" style="left:500.60px;top:414.47px;font-size:8.3px;line-height:8.3px;color:#1a1a1a;letter-spacing:-0.148px;word-spacing:1.000px;">comedidamente para <b>SOLICITARLE</b> de la manera más comedida, se nos ayude</div>
<div id="r_p2h" class="t dl" style="left:500.60px;top:424.57px;font-size:8.3px;line-height:8.3px;color:#1a1a1a;letter-spacing:0.000px;word-spacing:1.000px;transform:scaleX(0.9469);transform-origin:0 0;">con <b>materiales para poder distribuir el agua</b>, <b>en especial a los baños de esta</b></div>
<div id="r_p2i" class="t dl" style="left:500.60px;top:434.57px;font-size:8.3px;line-height:8.3px;color:#1a1a1a;letter-spacing:-0.053px;word-spacing:1.000px;"><b>Unidad Educativa.</b> Este pedido lo realizamos con la finalidad de abastecer de</div>
<div id="r_p2j" class="t dl" style="left:500.60px;top:444.57px;font-size:8.3px;line-height:8.3px;color:#1a1a1a;letter-spacing:0.030px;word-spacing:0.000px;">este el liquido vital a esta institución.</div>
<div id="r_of" class="t dl" style="left:636.70px;top:222.32px;font-size:8.6px;line-height:8.6px;color:#1a1a1a;letter-spacing:0.000px;word-spacing:0.000px;transform:scaleX(0.8990);transform-origin:0 0;"><b>Oficio Nro. 192 GADPRVH-O-WMC-08-2022.</b></div>
<div id="r_dt" class="t dl" style="left:661.80px;top:238.42px;font-size:8.6px;line-height:8.6px;color:#1a1a1a;letter-spacing:0.000px;word-spacing:0.000px;transform:scaleX(0.9030);transform-origin:0 0;">Valle Hermoso, 22 de agosto del 2022.</div>
<svg class="a" style="left:0;top:0;opacity:1" width="886" height="466" viewBox="0 0 886 466">
<g font-family="Liberation Sans" fill="#808080" fill-opacity="0.45">
<text x="673.4" y="433.3" font-size="12" textLength="93.6" lengthAdjust="spacingAndGlyphs">Activar Windows</text>
<text x="671.3" y="447.5" font-size="9.6" textLength="178.7" lengthAdjust="spacingAndGlyphs">Ve a Configuración para activar Windows.</text>
</g></svg>

<!-- scrollbar -->
<div class="a" style="left:875px;top:102px;width:11px;height:356px;background:#e8e8e8"></div>
<svg class="a" style="left:0;top:0" width="886" height="466" viewBox="0 0 886 466">
<rect x="875.5" y="102" width="10.5" height="356" fill="#dcdcdc"/>
<rect x="875.3" y="103.3" width="10" height="9.4" fill="#fff" stroke="#9a9a9a" stroke-width="0.8"/>
<path d="M878.2,109.5 L880.3,106.8 L882.4,109.5 Z" fill="#333"/>
<rect x="875.3" y="390.8" width="10" height="11" fill="#fff" stroke="#9a9a9a" stroke-width="0.8"/>
<rect x="875.3" y="447" width="10" height="9.4" fill="#fff" stroke="#9a9a9a" stroke-width="0.8"/>
<path d="M878.2,450.7 L882.4,450.7 L880.3,453.4 Z" fill="#333"/>
</svg>

<!-- ================= STATUS ================= -->
<div id="status" class="a"></div>
<svg class="a" style="left:0;top:0" width="886" height="466" viewBox="0 0 886 466">
<rect x="0" y="458" width="886" height="8" fill="#f3f3f3"/>
<rect x="0" y="458" width="886" height="0.8" fill="#d9d9d9"/>
<g font-family="Liberation Sans" font-size="9" fill="#444">
<text x="5.4" y="468.2" textLength="60" lengthAdjust="spacingAndGlyphs">Página 286 de 332</text>
<text x="78" y="468.2" textLength="49.3" lengthAdjust="spacingAndGlyphs">53761 palabras</text>
<text x="174.4" y="468.2" textLength="122" lengthAdjust="spacingAndGlyphs">Accesibilidad: es necesario investigar</text>
<text x="862.6" y="468.2" textLength="14.4" lengthAdjust="spacingAndGlyphs">80%</text>
</g>
<g fill="none" stroke="#777" stroke-width="0.8">
<path d="M140.5,461 H146 V466 M144,461 V466"/>
<path d="M147,462 L149.5,465.5"/>
<circle cx="165" cy="462.3" r="1.3"/>
<path d="M162.5,466 L164.5,463.5 L167,464.5 L170,466"/>
</g>
<rect x="717.7" y="458.8" width="25.4" height="7.2" fill="#c6c6c6"/>
<g fill="none" stroke="#888" stroke-width="0.8">
<rect x="699.8" y="461.2" width="4.2" height="6"/><rect x="704" y="461.2" width="4.3" height="6"/>
<rect x="725.8" y="461" width="9.2" height="6"/>
<rect x="751.3" y="461" width="9" height="6"/>
</g>
<rect x="773" y="463.3" width="4.8" height="0.8" fill="#555"/>
<rect x="780.7" y="464.8" width="66.3" height="0.9" fill="#555"/>
<rect x="805.5" y="461" width="3" height="5" fill="#444"/>
<rect x="814.6" y="462.8" width="0.8" height="3.5" fill="#555"/>
<path d="M849,463.7 H854.6 M851.8,460.9 V466" stroke="#555" stroke-width="0.8"/>
</svg>
</body></html>
